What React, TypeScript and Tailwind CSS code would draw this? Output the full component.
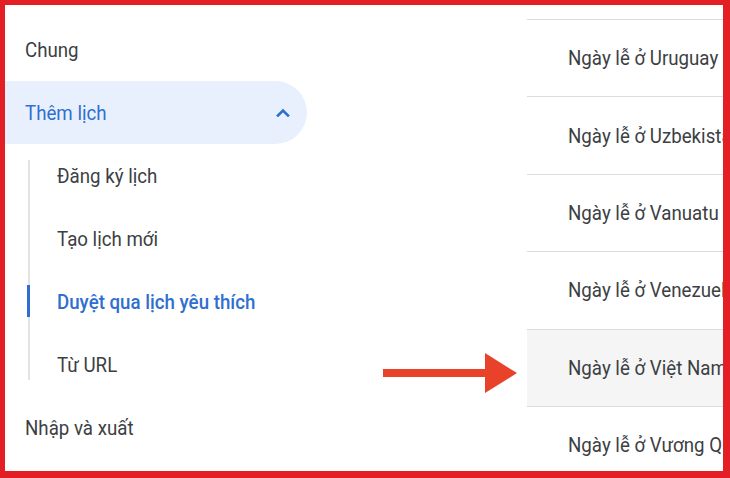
import React from "react";

const font = { fontFamily: "Roboto, 'Noto Sans', sans-serif" };

function T({ children }: { children: React.ReactNode }) {
  return <span className="inline-block origin-left scale-x-[0.935] whitespace-nowrap">{children}</span>;
}

function NavItem({ label }: { label: string }) {
  return (
    <div className="h-[63px] flex items-center pl-[20px] text-[20px] text-[#3c4043]">
      <T>{label}</T>
    </div>
  );
}

function SubItem({ label, active }: { label: string; active?: boolean }) {
  return (
    <div
      className={
        "h-[63px] flex items-center text-[20px] " +
        (active ? "text-[#2f6fd0] font-medium" : "text-[#3c4043]")
      }
    >
      <T>{label}</T>
    </div>
  );
}

const countries = [
  "Ngày lễ ở Uruguay",
  "Ngày lễ ở Uzbekistan",
  "Ngày lễ ở Vanuatu",
  "Ngày lễ ở Venezuela",
  "Ngày lễ ở Việt Nam",
  "Ngày lễ ở Vương Quốc Anh",
];

export default function App() {
  return (
    <div
      className="relative w-[730px] h-[478px] bg-white border-solid border-[#e31e25] border-l-[5px] border-t-[5px] border-r-[7px] border-b-[7px] overflow-hidden flex"
      style={font}
    >
      {/* Left navigation */}
      <div className="w-[522px] shrink-0 pt-[13px]">
        <NavItem label="Chung" />
        <div className="h-[63px] w-[302px] flex items-center justify-between pl-[20px] pr-[17px] bg-[#e8f0fe] rounded-r-full text-[20px] text-[#2f6fd0]">
          <T>Thêm lịch</T>
          <svg width="14" height="9" viewBox="0 0 14 9" fill="none">
            <path d="M2 7.5 L7 2.5 L12 7.5" stroke="#2f6fd0" strokeWidth="2.6" strokeLinecap="square" />
          </svg>
        </div>
        <div className="flex">
          <div className="ml-[22px] mt-[16px] w-[3px] flex flex-col items-end">
            <div className="h-[125px] w-[2px] bg-[#e3e3e6]" />
            <div className="h-[32px] w-[3px] bg-[#2f6fd0]" />
            <div className="h-[63px] w-[2px] bg-[#e3e3e6]" />
          </div>
          <div className="ml-[27px] flex flex-col">
            <SubItem label="Đăng ký lịch" />
            <SubItem label="Tạo lịch mới" />
            <SubItem label="Duyệt qua lịch yêu thích" active />
            <SubItem label="Từ URL" />
          </div>
        </div>
        <NavItem label="Nhập và xuất" />
      </div>

      {/* Right list */}
      <div className="flex-1 min-w-0 pt-[14px] overflow-hidden">
        {countries.map((c, i) => (
          <div
            key={c}
            className={
              "h-[77.4px] border-t border-[#dadce0] flex items-center pl-[41px] text-[20px] text-[#3c4043] whitespace-nowrap " +
              (i === 4 ? "bg-[#f5f5f5]" : "")
            }
          >
            <T>{c}</T>
          </div>
        ))}
      </div>

      {/* Annotation arrow */}
      <svg
        className="absolute left-[378px] top-[347px]"
        width="136"
        height="42"
        viewBox="0 0 136 42"
      >
        <rect x="0" y="17" width="104" height="8" fill="#e8422b" />
        <polygon points="102,1 134,21 102,41" fill="#e8422b" />
      </svg>
    </div>
  );
}
